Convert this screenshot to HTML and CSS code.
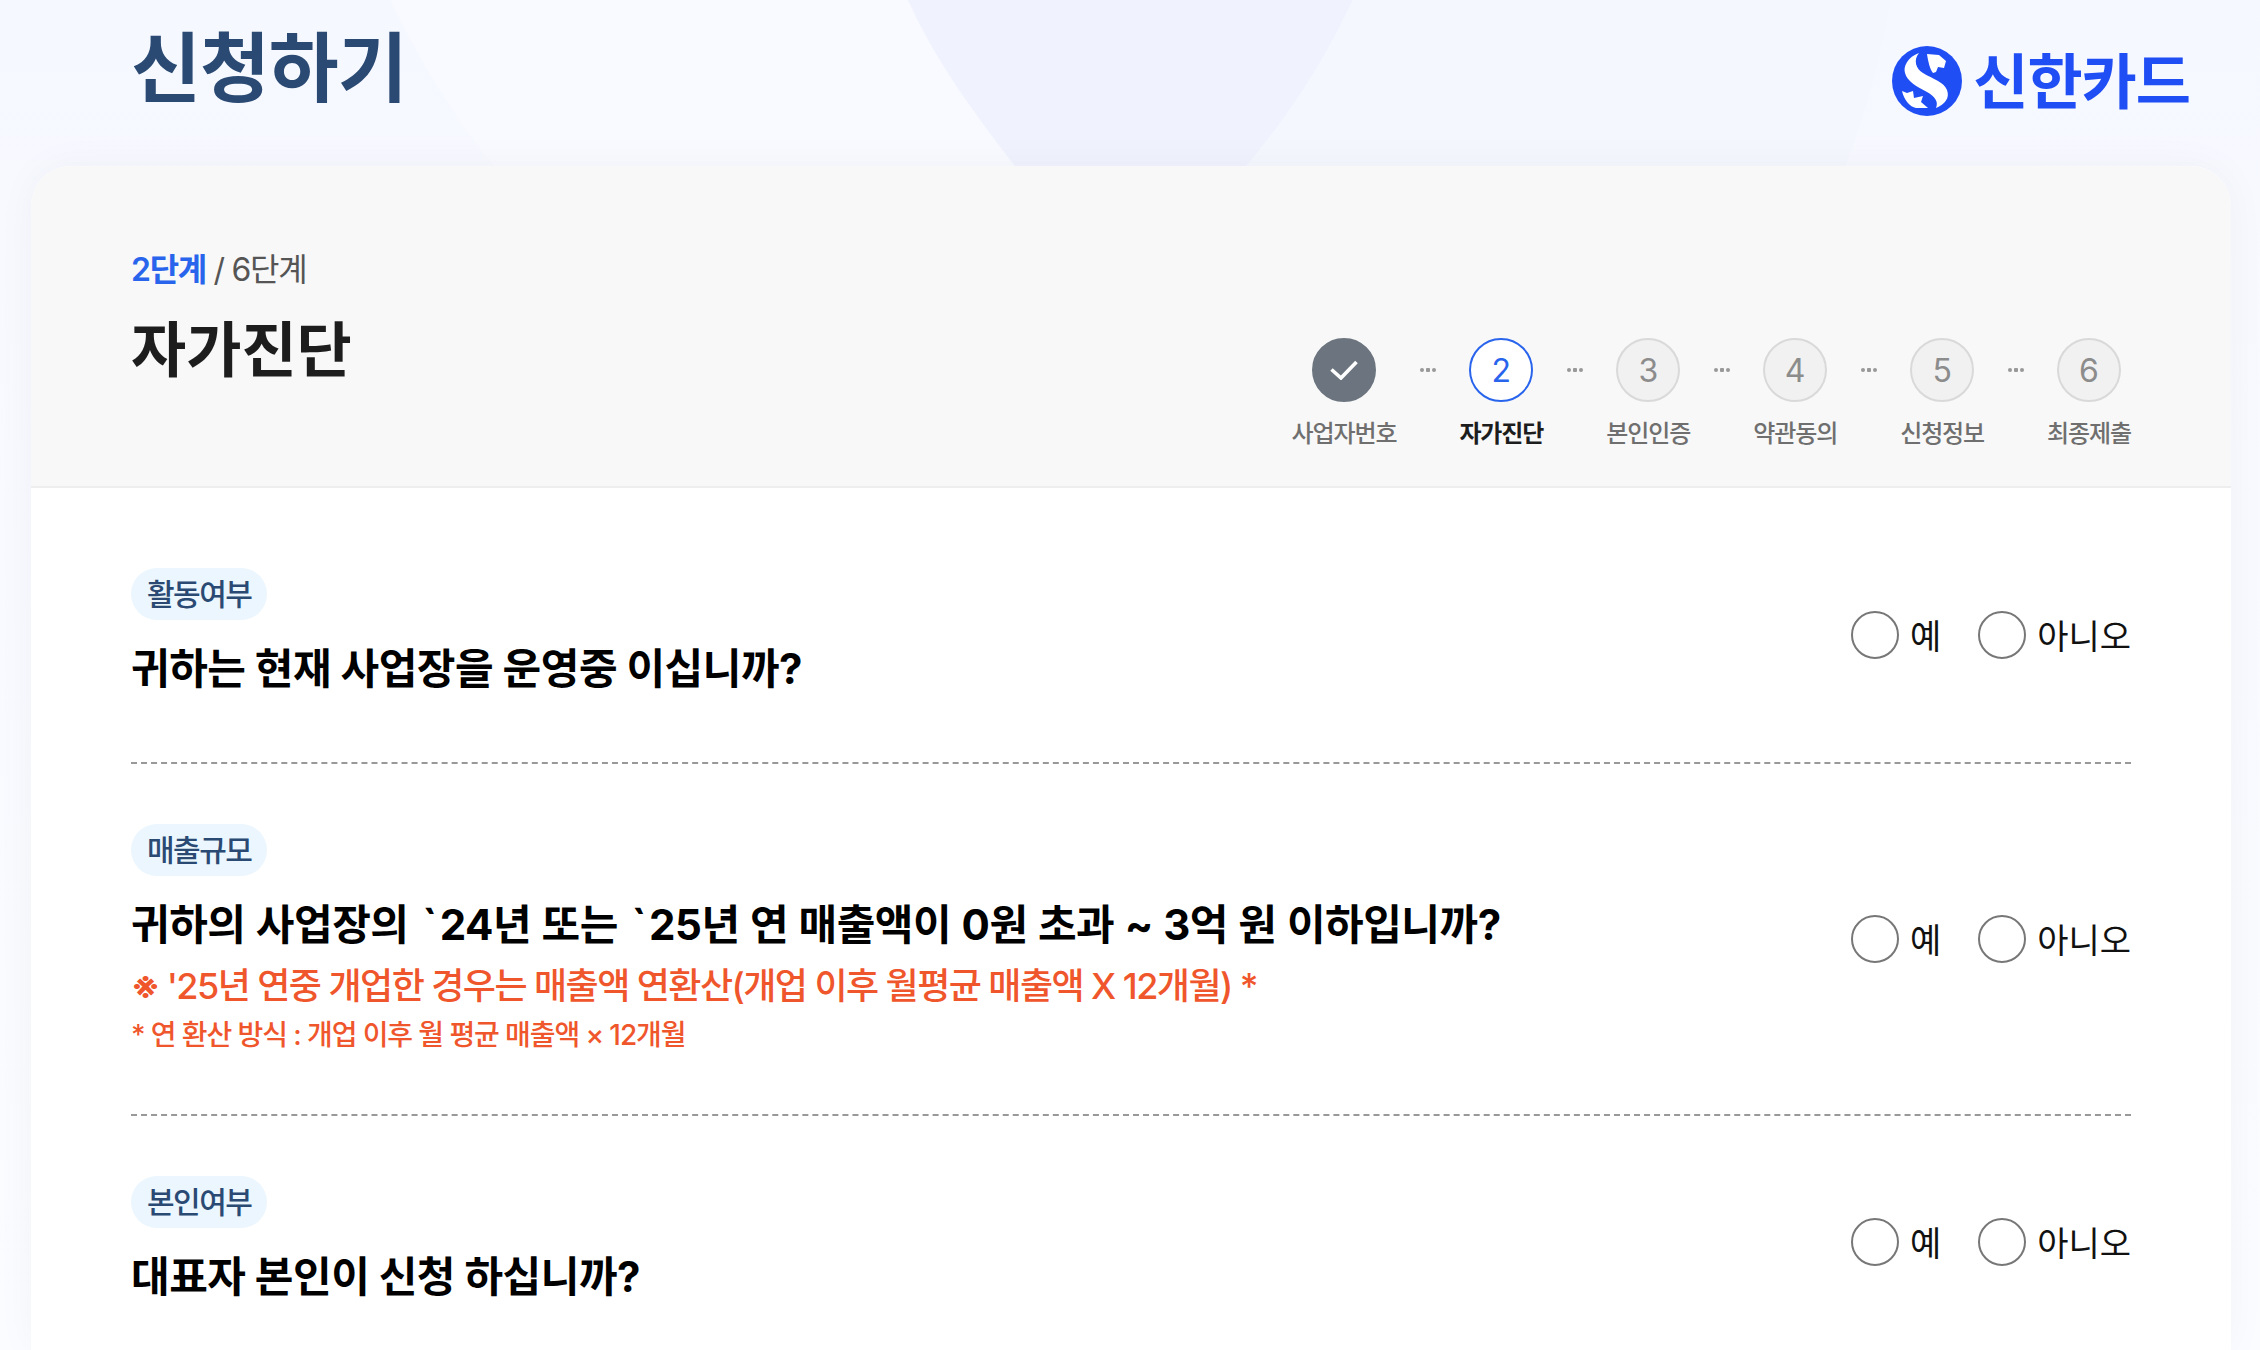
FILE: index.html
```html
<!DOCTYPE html>
<html lang="ko">
<head>
    <meta charset="UTF-8">
    <meta name="viewport" content="width=device-width, initial-scale=1.0">
    <title>신청하기</title>
    <link rel="stylesheet" href="styles.css">
</head>
<body>

<!-- Background shapes -->
<svg class="bg-shapes" width="2260" height="170" viewBox="0 0 2260 170">
    <path d="M390 0 C420 60 455 120 498 170 L1018 170 C975 115 935 60 908 0 Z" fill="#f9faff"/>
    <path d="M908 0 C935 60 975 115 1018 170 L1243 170 C1290 115 1325 60 1353 0 Z" fill="#f0f3fe"/>
    <path d="M1353 0 C1325 60 1290 115 1243 170 L1844 170 C1865 115 1880 60 1891 0 Z" fill="#f4f7fe"/>
</svg>

<header class="top">
    <h1 class="page-title">신청하기</h1>
    <div class="brand">
        <svg class="brand-mark" width="70" height="70" viewBox="0 0 70 70">
            <circle cx="35" cy="35" r="35" fill="#1f4ef5"/>
            <path d="M27 7 C16 11 11 20 13 27 C15 35 25 41 35 46 C42 50 47 55 44 62 C53 58 58 52 55 44 C52 36 41 33 31 27 C24 23 21 14 27 7 Z" fill="#fff"/>
            <path d="M35 8 L47 9 L54 15 L52 22 L46 21 L44 26 L41 27 C38 24 36 15 35 8 Z" fill="#fff"/>
            <path d="M10 45 L15 47 L21 45 L22 52 L31 50 L29 56 L36 62 L24 62 C18 61 12 54 10 45 Z" fill="#fff"/>
        </svg>
        <span class="brand-name">신한카드</span>
    </div>
</header>

<main class="card">
    <section class="card-head">
        <div class="head-text">
            <p class="step-count"><strong>2단계</strong> / 6단계</p>
            <h2 class="step-title">자가진단</h2>
        </div>
        <ol class="stepper">
            <li class="step done">
                <span class="step-num">
                    <svg width="28" height="20" viewBox="0 0 28 20"><path d="M1.5 9.5 L11 18 L26.5 2" fill="none" stroke="#fff" stroke-width="3.6"/></svg>
                </span>
                <span class="step-label">사업자번호</span>
            </li>
            <li class="step-dots"></li>
            <li class="step current">
                <span class="step-num">2</span>
                <span class="step-label">자가진단</span>
            </li>
            <li class="step-dots"></li>
            <li class="step">
                <span class="step-num">3</span>
                <span class="step-label">본인인증</span>
            </li>
            <li class="step-dots"></li>
            <li class="step">
                <span class="step-num">4</span>
                <span class="step-label">약관동의</span>
            </li>
            <li class="step-dots"></li>
            <li class="step">
                <span class="step-num">5</span>
                <span class="step-label">신청정보</span>
            </li>
            <li class="step-dots"></li>
            <li class="step">
                <span class="step-num">6</span>
                <span class="step-label">최종제출</span>
            </li>
        </ol>
    </section>

    <section class="questions">
        <div class="question q-first">
            <div class="q-body">
                <span class="tag">활동여부</span>
                <p class="q-text">귀하는 현재 사업장을 운영중 이십니까?</p>
            </div>
            <div class="choices">
                <label class="choice"><span class="radio"></span>예</label>
                <label class="choice"><span class="radio"></span>아니오</label>
            </div>
        </div>
        <div class="question q-second">
            <div class="q-body">
                <span class="tag">매출규모</span>
                <p class="q-text q-long">귀하의 사업장의 <span class="tick">`</span>24년 또는 <span class="tick">`</span>25년 연 매출액이 0원 초과 ~ 3억 원 이하입니까?</p>
                <p class="q-note"><strong>※</strong> '25년 연중 개업한 경우는 매출액 연환산(개업 이후 월평균 매출액 X 12개월) *</p>
                <p class="q-small">* 연 환산 방식 : 개업 이후 월 평균 매출액 × 12개월</p>
            </div>
            <div class="choices">
                <label class="choice"><span class="radio"></span>예</label>
                <label class="choice"><span class="radio"></span>아니오</label>
            </div>
        </div>
        <div class="question q-third">
            <div class="q-body">
                <span class="tag">본인여부</span>
                <p class="q-text">대표자 본인이 신청 하십니까?</p>
            </div>
            <div class="choices">
                <label class="choice"><span class="radio"></span>예</label>
                <label class="choice"><span class="radio"></span>아니오</label>
            </div>
        </div>
    </section>
</main>

</body>
</html>
```

FILE: styles.css
```css
* {
    box-sizing: border-box;
}

body {
    margin: 0;
    height: 1350px;
    overflow: hidden;
    position: relative;
    background: linear-gradient(#f5f8ff, #f7f9ff 200px, #fbfcff);
    font-family: Inter, "Noto Sans CJK KR", sans-serif;
    color: #111;
}

.bg-shapes {
    position: absolute;
    top: 0;
    left: 0;
}

.top {
    position: relative;
    height: 166px;
    padding: 0 70px 0 131px;
    display: flex;
    justify-content: space-between;
}

.page-title {
    margin: 22px 0 0;
    font-size: 76px;
    line-height: 92px;
    font-weight: 700;
    letter-spacing: -1px;
    color: #2a4a73;
}

.brand {
    display: flex;
    align-items: center;
    gap: 11px;
    height: 70px;
    margin-top: 46px;
}

.brand-name {
    margin-bottom: 8px;
    font-size: 60px;
    font-weight: 700;
    letter-spacing: -1px;
    color: #1f4ef5;
}

.card {
    position: relative;
    margin: 0 29px 0 31px;
    height: 1184px;
    background: #fff;
    border-radius: 40px 40px 0 0;
    box-shadow: 0 0 40px rgba(0, 0, 0, 0.04);
}

.card-head {
    height: 322px;
    padding: 0 100px;
    background: #f8f8f8;
    border-bottom: 2px solid #eee;
    border-radius: 40px 40px 0 0;
    display: flex;
    justify-content: space-between;
}

.step-count {
    margin: 82px 0 0;
    font-size: 32px;
    line-height: 44px;
    letter-spacing: -1.3px;
    color: #555;
}

.step-count strong {
    font-weight: 600;
    color: #2864ec;
}

.step-title {
    margin: 16px 0 0;
    font-size: 60px;
    line-height: 84px;
    font-weight: 700;
    color: #1d1d1d;
}

.stepper {
    list-style: none;
    margin: 0;
    padding: 172px 0 0;
    display: flex;
    align-items: flex-start;
}

.step {
    display: flex;
    flex-direction: column;
    align-items: center;
}

.step-num {
    width: 64px;
    height: 64px;
    border-radius: 50%;
    border: 2px solid #d9d9d9;
    background: #f1f1f1;
    color: #8c8c8c;
    font-size: 32px;
    display: flex;
    align-items: center;
    justify-content: center;
}

.step-label {
    margin-top: 16px;
    font-size: 24px;
    line-height: 32px;
    font-weight: 500;
    letter-spacing: -1.1px;
    white-space: nowrap;
    color: #6f6f6f;
}

.step.done .step-num {
    background: #6c757f;
    border-color: #6c757f;
}

.step.current .step-num {
    background: #fff;
    border-color: #2864ec;
    color: #2864ec;
}

.step.current .step-label {
    font-weight: 700;
    color: #1d1d1d;
}

.step-dots {
    width: 63px;
    height: 64px;
    display: flex;
    align-items: center;
    justify-content: center;
    background: radial-gradient(circle, #999 2px, transparent 2.5px) center / 8px 8px no-repeat;
}

.step-dots::before,
.step-dots::after {
    content: "";
    width: 4px;
    height: 4px;
    border-radius: 50%;
    background: #999;
    margin: 0 4px;
}

.questions {
    padding: 0 100px;
}

.question {
    display: flex;
    justify-content: space-between;
    border-bottom: 2px dashed #999;
}

.q-first {
    height: 276px;
    padding-top: 80px;
}

.q-second {
    height: 352px;
    padding-top: 60px;
}

.q-third {
    border-bottom: none;
    padding-top: 60px;
}

.tag {
    display: inline-block;
    height: 52px;
    padding: 0 16px;
    border-radius: 26px;
    background: #ebf6fe;
    color: #2a4a73;
    font-size: 30px;
    line-height: 52px;
    font-weight: 500;
    letter-spacing: -1.5px;
}

.q-text {
    margin: 19px 0 0;
    font-size: 42px;
    line-height: 60px;
    font-weight: 700;
    letter-spacing: -0.5px;
    color: #000;
}

.q-long {
    word-spacing: 1px;
}

.tick {
    margin: 0 3px;
}

.q-note {
    margin: 6px 0 0;
    font-size: 36px;
    line-height: 50px;
    font-weight: 500;
    letter-spacing: -1.55px;
    color: #f0562c;
}

.q-note strong {
    font-weight: 700;
}

.q-small {
    margin: 4px 0 0;
    font-size: 28px;
    line-height: 40px;
    font-weight: 500;
    letter-spacing: -1.1px;
    color: #f0562c;
}

.choices {
    display: flex;
    gap: 37px;
    height: 48px;
}

.q-first .choices {
    margin-top: 42px;
}

.q-second .choices {
    margin-top: 90px;
}

.q-third .choices {
    margin-top: 41px;
}

.choice {
    display: flex;
    align-items: center;
    gap: 11px;
    font-size: 34px;
    color: #111;
}

.radio {
    width: 48px;
    height: 48px;
    margin-top: 2px;
    border: 2px solid #777;
    border-radius: 50%;
    background: #fff;
}
```
